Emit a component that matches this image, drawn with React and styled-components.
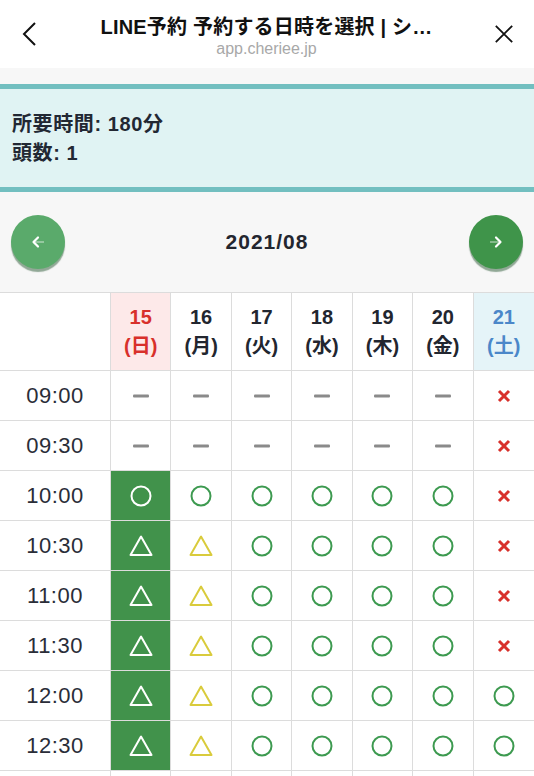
import React from "react";
import styled, { createGlobalStyle } from "styled-components";

const GlobalStyle = createGlobalStyle`
  body {
    margin: 0;
    background: #f7f7f7;
    font-family: "Liberation Sans", "Noto Sans CJK JP", sans-serif;
    color: #22262f;
  }
`;

const Page = styled.div`
  width: 534px;
  background: #f7f7f7;
`;

const TopBar = styled.header`
  height: 68px;
  background: #fff;
  display: flex;
  align-items: center;
  padding: 0 20px 0 19px;
  box-sizing: border-box;
`;

const BarIcon = styled.div`
  width: 20px;
  display: flex;
  justify-content: center;
  svg {
    display: block;
  }
`;

const TitleBlock = styled.div`
  flex: 1;
  margin-top: 6px;
  text-align: center;
`;

const Title = styled.div`
  font-size: 20px;
  font-weight: 700;
  line-height: 24px;
  letter-spacing: 0.2px;
  color: #111;
`;

const Domain = styled.div`
  font-size: 16px;
  line-height: 20px;
  color: #a8a8a8;
`;

const InfoBox = styled.section`
  margin-top: 16px;
  border-top: 5px solid #72bfc0;
  border-bottom: 5px solid #72bfc0;
  background: #e0f3f3;
  padding: 21px 12px 19px;
`;

const InfoLine = styled.div`
  font-size: 20px;
  font-weight: 700;
  line-height: 29px;
  letter-spacing: 0.6px;
  color: #222833;
`;

const MonthNav = styled.div`
  height: 100px;
  display: flex;
  align-items: center;
  justify-content: space-between;
  padding: 0 11px;
`;

const NavButton = styled.button`
  width: 54px;
  height: 54px;
  border: none;
  border-radius: 50%;
  padding: 0;
  display: flex;
  align-items: center;
  justify-content: center;
  background: ${(p) => (p.$tone === "light" ? "#5aaa6b" : "#3f944a")};
  box-shadow: 0 3px 1px rgba(20, 70, 30, 0.45);
`;

const MonthLabel = styled.div`
  font-size: 21px;
  font-weight: 700;
  letter-spacing: 1px;
  color: #23262f;
`;

const Grid = styled.div`
  display: grid;
  grid-template-columns: 111px repeat(7, 1fr);
  background: #fff;
  border-top: 1px solid #dcdcdc;
`;

const Cell = styled.div`
  border-right: 1px solid #dcdcdc;
  border-bottom: 1px solid #dcdcdc;
  display: flex;
  align-items: center;
  justify-content: center;
  height: 49px;
  box-sizing: content-box;
  &:nth-child(8n) {
    border-right: none;
  }
`;

const HeadCell = styled(Cell)`
  height: 77px;
  flex-direction: column;
  font-size: 20px;
  font-weight: 700;
  line-height: 29px;
  background: ${(p) =>
    p.$tone === "sun" ? "#fde9e9" : p.$tone === "sat" ? "#e5f4f8" : "#fff"};
  color: ${(p) =>
    p.$tone === "sun" ? "#d8302b" : p.$tone === "sat" ? "#4b87c9" : "#22262f"};
`;

const TimeCell = styled(Cell)`
  font-size: 22px;
  letter-spacing: 0.5px;
  color: #2a2d38;
`;

const SlotCell = styled(Cell)`
  background: ${(p) => (p.$selected ? "#41924b" : "#fff")};
`;

const Back = () => (
  <svg width="16" height="26" viewBox="0 0 16 26">
    <path d="M14 2 L3 13 L14 24" fill="none" stroke="#111" strokeWidth="2" />
  </svg>
);

const Close = () => (
  <svg width="22" height="22" viewBox="0 0 22 22">
    <path d="M2 2 L20 20 M20 2 L2 20" stroke="#111" strokeWidth="2" />
  </svg>
);

const Arrow = ({ dir }) => (
  <svg
    width="16"
    height="16"
    viewBox="0 0 16 16"
    style={dir === "right" ? { transform: "scaleX(-1)" } : undefined}
  >
    <path d="M5 8 H14" stroke="rgba(255,255,255,0.45)" strokeWidth="1.6" />
    <path
      d="M8 3.5 L3.5 8 L8 12.5"
      fill="none"
      stroke="#fff"
      strokeWidth="2.2"
      strokeLinecap="round"
      strokeLinejoin="round"
    />
  </svg>
);

const Mark = ({ kind, selected }) => {
  if (kind === "o") {
    const c = selected ? "#fff" : "#3d9a50";
    return (
      <svg width="22" height="22" viewBox="0 0 22 22">
        <circle cx="11" cy="11" r="9.5" fill="none" stroke={c} strokeWidth="2" />
      </svg>
    );
  }
  if (kind === "t") {
    const c = selected ? "#fff" : "#d9cb3c";
    return (
      <svg width="26" height="24" viewBox="0 0 26 24">
        <path
          d="M13 2.5 L2.5 21 L23.5 21 Z"
          fill="none"
          stroke={c}
          strokeWidth="2"
          strokeLinejoin="round"
        />
      </svg>
    );
  }
  if (kind === "x") {
    return (
      <svg width="14" height="14" viewBox="0 0 14 14">
        <path d="M2 2 L12 12 M12 2 L2 12" stroke="#d8302b" strokeWidth="3" />
      </svg>
    );
  }
  return (
    <svg width="16" height="4" viewBox="0 0 16 4">
      <rect x="0" y="0.5" width="16" height="3" rx="1" fill="#8a8a8a" />
    </svg>
  );
};

const days = [
  { d: "15", w: "日", tone: "sun" },
  { d: "16", w: "月" },
  { d: "17", w: "火" },
  { d: "18", w: "水" },
  { d: "19", w: "木" },
  { d: "20", w: "金" },
  { d: "21", w: "土", tone: "sat" },
];

// 大文字 = 選択中の列 (O: 空きあり, T: 残りわずか)
const rows = [
  { t: "09:00", s: "------x" },
  { t: "09:30", s: "------x" },
  { t: "10:00", s: "Oooooox" },
  { t: "10:30", s: "Ttoooox" },
  { t: "11:00", s: "Ttoooox" },
  { t: "11:30", s: "Ttoooox" },
  { t: "12:00", s: "Ttooooo" },
  { t: "12:30", s: "Ttooooo" },
  { t: "13:00", s: "ttooooo" },
];

export default function App() {
  return (
    <Page>
      <GlobalStyle />
      <TopBar>
        <BarIcon>
          <Back />
        </BarIcon>
        <TitleBlock>
          <Title>LINE予約 予約する日時を選択 | シ…</Title>
          <Domain>app.cheriee.jp</Domain>
        </TitleBlock>
        <BarIcon>
          <Close />
        </BarIcon>
      </TopBar>

      <InfoBox>
        <InfoLine>所要時間: 180分</InfoLine>
        <InfoLine>頭数: 1</InfoLine>
      </InfoBox>

      <MonthNav>
        <NavButton $tone="light">
          <Arrow dir="left" />
        </NavButton>
        <MonthLabel>2021/08</MonthLabel>
        <NavButton $tone="dark">
          <Arrow dir="right" />
        </NavButton>
      </MonthNav>

      <Grid>
        <HeadCell />
        {days.map((day) => (
          <HeadCell key={day.d} $tone={day.tone}>
            <span>{day.d}</span>
            <span>({day.w})</span>
          </HeadCell>
        ))}
        {rows.map((row) => (
          <React.Fragment key={row.t}>
            <TimeCell>{row.t}</TimeCell>
            {row.s.split("").map((ch, i) => {
              const selected = ch === "O" || ch === "T";
              return (
                <SlotCell key={i} $selected={selected}>
                  <Mark kind={ch.toLowerCase()} selected={selected} />
                </SlotCell>
              );
            })}
          </React.Fragment>
        ))}
      </Grid>
    </Page>
  );
}
